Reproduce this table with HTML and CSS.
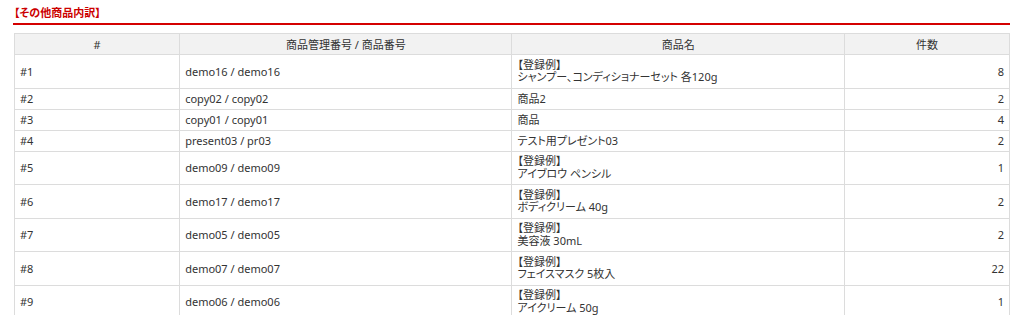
FILE: index.html
```html
<!DOCTYPE html>
<html lang="ja">
<head>
<meta charset="utf-8">
<title>その他商品内訳</title>
<link rel="stylesheet" href="styles.css">
</head>
<body>
<div class="page">
  <h2 class="section-title">【その他商品内訳】</h2>
  <table class="items">
    <colgroup>
      <col class="c-no">
      <col class="c-code">
      <col class="c-name">
      <col class="c-qty">
    </colgroup>
    <thead>
      <tr><th>#</th><th>商品管理番号 / 商品番号</th><th>商品名</th><th>件数</th></tr>
    </thead>
    <tbody>
      <tr><td>#1</td><td>demo16 / demo16</td><td><span class="ln">【登録例】</span><span class="ln">シャンプー、コンディショナーセット 各120g</span></td><td class="num">8</td></tr>
      <tr><td>#2</td><td>copy02 / copy02</td><td>商品2</td><td class="num">2</td></tr>
      <tr><td>#3</td><td>copy01 / copy01</td><td>商品</td><td class="num">4</td></tr>
      <tr><td>#4</td><td>present03 / pr03</td><td>テスト用プレゼント03</td><td class="num">2</td></tr>
      <tr><td>#5</td><td>demo09 / demo09</td><td><span class="ln">【登録例】</span><span class="ln">アイブロウ ペンシル</span></td><td class="num">1</td></tr>
      <tr><td>#6</td><td>demo17 / demo17</td><td><span class="ln">【登録例】</span><span class="ln">ボディクリーム 40g</span></td><td class="num">2</td></tr>
      <tr><td>#7</td><td>demo05 / demo05</td><td><span class="ln">【登録例】</span><span class="ln">美容液 30mL</span></td><td class="num">2</td></tr>
      <tr><td>#8</td><td>demo07 / demo07</td><td><span class="ln">【登録例】</span><span class="ln">フェイスマスク 5枚入</span></td><td class="num">22</td></tr>
      <tr><td>#9</td><td>demo06 / demo06</td><td><span class="ln">【登録例】</span><span class="ln">アイクリーム 50g</span></td><td class="num">1</td></tr>
    </tbody>
  </table>
</div>
</body>
</html>
```
FILE: styles.css
```css
html, body {
  margin: 0;
  padding: 0;
  background: #fff;
}
body {
  font-family: "Noto Sans", "Noto Sans CJK JP", sans-serif;
  font-size: 11px;
  color: #333;
  font-feature-settings: "palt";
}
.page {
  padding: 5px 14px 0 13px;
}
.section-title {
  margin: 0;
  padding: 0 0 2px 1px;
  font-size: 11px;
  line-height: 16px;
  font-weight: bold;
  color: #cc0000;
  border-bottom: 2px solid #d40000;
}
.items {
  margin: 8px 0 0 1px;
  width: calc(100% - 1px);
  border-collapse: collapse;
  table-layout: fixed;
}
.c-no { width: 16.6%; }
.c-code { width: 33.4%; }
.c-name { width: 33.4%; }
.c-qty { width: 16.6%; }
.items th,
.items td {
  border: 1px solid #dcdcdc;
  padding: 3.5px 5px;
  line-height: 13px;
  vertical-align: middle;
  text-align: left;
  font-weight: normal;
}
.items th {
  background: #f2f2f2;
  text-align: center;
}
.items td.num {
  text-align: right;
}
.ln {
  display: block;
  height: 12.75px;
  line-height: 12.75px;
  white-space: nowrap;
}
```
